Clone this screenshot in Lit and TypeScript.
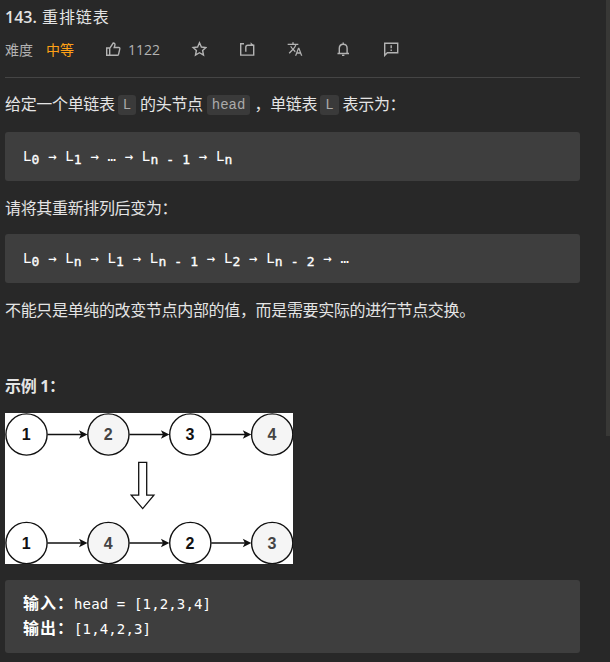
import { LitElement, html, css, svg } from "lit";
import { customElement } from "lit/decorators.js";

const ROWS = [
  { y: 21.5, values: ["1", "2", "3", "4"] },
  { y: 130, values: ["1", "4", "2", "3"] },
];

@customElement("list-diagram")
class ListDiagram extends LitElement {
  static styles = css`
    :host { display: block; width: 288px; height: 151px; background: #fff; }
    svg { display: block; }
    .node { fill: #fff; stroke: #111; stroke-width: 1.4; }
    .shaded { fill: #f5f5f5; }
    .line { stroke: #111; stroke-width: 1.4; }
    .down { fill: #fff; stroke: #111; stroke-width: 1.3; }
    text { font: bold 16px "Liberation Sans", sans-serif; text-anchor: middle; fill: #111; }
    .dim { fill: #444; }
  `;
  render() {
    return html`<svg width="288" height="151" viewBox="0 0 288 151">
      ${ROWS.map((r) => r.values.map((v, i) => {
        const x = 21.5 + i * 81.9;
        const odd = i % 2 === 1;
        return svg`
          <circle class="node ${odd ? "shaded" : ""}" cx=${x} cy=${r.y} r="20.6"></circle>
          <text class=${odd ? "dim" : ""} x=${x - 0.3} y=${r.y + 5.7}>${v}</text>
          ${i < 3 ? svg`
            <line class="line" x1=${x + 21} x2=${x + 56} y1=${r.y} y2=${r.y}></line>
            <path fill="#111" d="M${x + 61} ${r.y}l-8.5-4.2 2.1 4.2-2.1 4.2z"></path>` : ""}`;
      }))}
      <path class="down" d="M133.7 49.3h8V82.2h7.2L137.7 95.6 126.2 82.2h7.5z"></path>
    </svg>`;
  }
}

@customElement("app-root")
class AppRoot extends LitElement {
  static styles = css`
    :host {
      display: flex; box-sizing: border-box; width: 610px; height: 662px; overflow: hidden;
      background: #282828; color: #e4e4e4;
      font: 16px/24px "Open Sans", "Noto Sans CJK SC", sans-serif;
    }
    .content { width: 575px; margin-left: 5px; white-space: nowrap; }
    .gutter { width: 4px; height: 436px; margin-left: 26px; background: #383836; }
    h1 { margin: 5px 0 0; font-size: 16px; line-height: 24px; height: 24px; font-weight: 400; display: flex; }
    .number { font-weight: 600; width: 37px; }
    .name { letter-spacing: .9px; }
    .meta { display: flex; align-items: center; height: 24px; margin-top: 9px; font-size: 14px; color: #b3b3b3; }
    .level { color: #ffa116; margin-left: 13px; }
    .meta svg { display: block; fill: none; stroke: #b3b3b3; stroke-width: 1.4; width: 16px; height: 16px; }
    .likes { display: flex; align-items: center; gap: 7px; margin-left: 31px; width: 86px; }
    .likes svg { position: relative; top: -1px; }
    .tool { width: 48px; position: relative; top: -1px; }
    .rule { height: 1px; margin-top: 15px; background: #454545; }
    p { margin: 0; height: 24px; letter-spacing: -.34px; }
    .intro { display: flex; align-items: center; margin-top: 14px; }
    code {
      height: 20px; line-height: 21px; box-sizing: border-box; padding: 0 5px; margin: 1px 4px 0 3px;
      border-radius: 3px; background: #3a3a3a; color: #aaa; letter-spacing: .04px;
      font-family: "Liberation Mono", monospace; font-size: 14px;
    }
    .intro code:nth-of-type(2) { margin-left: 4px; }
    pre {
      margin: 0; box-sizing: border-box; height: 49px; padding: 12px 18px; border-radius: 3px;
      background: #3e3e3e; color: #fff; line-height: 24px;
      font-family: "DejaVu Sans Mono", "Noto Sans CJK SC", monospace; font-size: 14px; letter-spacing: .14px;
    }
    sub { font-size: 13px; line-height: 0; vertical-align: -3px; letter-spacing: .15px; -webkit-text-stroke: .35px #fff; }
    .s0 { margin-top: 16px; }
    .s1 { margin-top: 15px; }
    .s3 { margin-top: 14px; }
    .example { margin-top: 52px; font-weight: 700; }
    list-diagram { margin-top: 15px; }
    .io { margin-top: 16px; height: 73px; padding: 12px 18px; line-height: 25px; }
    .io b { font-family: "Noto Sans CJK SC", sans-serif; font-size: 16px; letter-spacing: 1px; line-height: 20px; }
  `;
  render() {
    return html`
      <main class="content">
        <h1><span class="number">143.</span><span class="name">重排链表</span></h1>
        <div class="meta">
          <span>难度</span><span class="level">中等</span>
          <span class="likes">
            <svg viewBox="0 0 16 16"><path d="M1.7 7h3v7.3h-3zM4.7 7.3 8.2 2c1.5 0 2 .9 1.7 2.1L9.2 6.5h4.6c.8 0 1.2.7 1 1.4l-1.2 5.3c-.2.7-.6 1.1-1.3 1.1H4.7"/></svg>
            <span>1122</span>
          </span>
          <span class="tool"><svg viewBox="0 0 16 16"><path d="m8.5 1.8 1.9 4.2 4.5.5-3.3 3 .9 4.5-4-2.3-4 2.3.9-4.5-3.3-3 4.5-.5z"/></svg></span>
          <span class="tool"><svg viewBox="0 0 16 16"><path d="M5 2.7H1.7v11.4h13V4.2H8.8C7.5 4.2 6.8 5 6.8 6.2v4.6"/><path fill="#b3b3b3" stroke="none" d="M11.6 1.3 15 4.4h-3.4z"/></svg></span>
          <span class="tool"><svg viewBox="0 0 24 24"><path fill="#b3b3b3" stroke="none" d="m12.87 15.07-2.54-2.51.03-.03A17.5 17.5 0 0 0 14.07 6H17V4h-7V2H8v2H1v2h11.17C11.5 7.92 10.44 9.75 9 11.35 8.07 10.32 7.3 9.19 6.69 8h-2c.73 1.63 1.73 3.17 2.98 4.56l-5.09 5.02L4 19l5-5 3.11 3.11zM18.5 10h-2L12 22h2l1.12-3h4.75L21 22h2zm-2.62 7 1.62-4.33L19.12 17z"/></svg></span>
          <span class="tool"><svg viewBox="0 0 16 16"><path d="M2.5 12.5H14M4.3 12.5V7.3c0-2.3 1.5-4 3.9-4s3.9 1.7 3.9 4v5.2M8.2 1.5v1.8"/><path d="M7 14.3h2.4"/></svg></span>
          <span class="tool"><svg viewBox="0 0 16 16"><path d="M1.7 14.4V2.2h13v9.5H4.3zM8.2 4.3v3M8.2 8.6v1.5"/></svg></span>
        </div>
        <div class="rule"></div>
        <p class="intro">给定一个单链表<code>L</code>的头节点<code>head</code>，单链表<code>L</code>表示为：</p>
        <pre class="s0">L<sub>0</sub> → L<sub>1</sub> → … → L<sub>n - 1</sub> → L<sub>n</sub></pre>
        <p class="s1">请将其重新排列后变为：</p>
        <pre class="s3">L<sub>0</sub> → L<sub>n</sub> → L<sub>1</sub> → L<sub>n - 1</sub> → L<sub>2</sub> → L<sub>n - 2</sub> → …</pre>
        <p class="s1">不能只是单纯的改变节点内部的值，而是需要实际的进行节点交换。</p>
        <p class="example">示例 1：</p>
        <list-diagram></list-diagram>
        <pre class="io"><b>输入：</b>head = [1,2,3,4]
<b>输出：</b>[1,4,2,3]</pre>
      </main>
      <div class="gutter"></div>`;
  }
}
